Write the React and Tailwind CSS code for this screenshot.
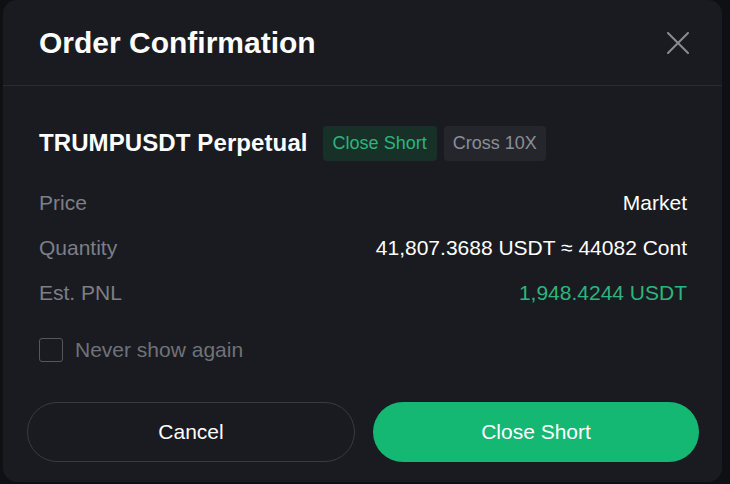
export default function App() {
  const rows = [
    { label: "Price", value: "Market", tone: "text-white" },
    { label: "Quantity", value: "41,807.3688 USDT ≈ 44082 Cont", tone: "text-white" },
    { label: "Est. PNL", value: "1,948.4244 USDT", tone: "text-[#2bb67d]" },
  ];

  return (
    <div className="w-[730px] h-[484px] bg-[#0f1013] font-['Liberation_Sans',Arial,sans-serif] overflow-hidden">
      <div className="ml-[3px] w-[719px] h-[482px] bg-[#1a1b20] rounded-[14px] flex flex-col">
        {/* Header */}
        <div className="h-[86px] flex items-center justify-between pl-[36px] pr-[32px] border-b border-[#2a2b31]">
          <h1 className="text-[30px] font-bold text-white">Order Confirmation</h1>
          <button className="w-[24px] h-[24px] flex items-center justify-center text-[#8a8c92]">
            <svg width="22" height="22" viewBox="0 0 22 22" fill="none" stroke="currentColor" strokeWidth="2" strokeLinecap="round">
              <path d="M1 1L21 21M21 1L1 21" />
            </svg>
          </button>
        </div>

        {/* Body */}
        <div className="pl-[36px] pr-[35px] pt-[39px]">
          <div className="flex items-center gap-[7px]">
            <span className="text-[24px] font-bold text-white mr-[8px] tracking-[0.1px]">TRUMPUSDT Perpetual</span>
            <span className="h-[35px] px-[10px] flex items-center rounded-[4px] bg-[#173028] text-[#2bb67d] text-[18px]">Close Short</span>
            <span className="h-[35px] px-[9px] flex items-center rounded-[4px] bg-[#25262c] text-[#8b8e95] text-[18px]">Cross 10X</span>
          </div>

          <div className="mt-[19px] flex flex-col">
            {rows.map((r) => (
              <div key={r.label} className="h-[45px] flex items-center justify-between text-[21px]">
                <span className="text-[#7c7f87]">{r.label}</span>
                <span className={r.tone}>{r.value}</span>
              </div>
            ))}
          </div>

          <label className="mt-[19px] flex items-center gap-[12px]">
            <span className="w-[24px] h-[24px] rounded-[3px] border border-[#55575e]" />
            <span className="text-[21px] text-[#6f727a]">Never show again</span>
          </label>
        </div>

        {/* Footer */}
        <div className="mt-[36px] pl-[24px] pr-[23px] flex gap-[18px]">
          <button className="flex-1 h-[60px] rounded-full border border-[#3a3b42] text-white text-[21px]">Cancel</button>
          <button className="flex-1 h-[60px] rounded-full bg-[#14b873] text-white text-[21px]">Close Short</button>
        </div>
      </div>
    </div>
  );
}
